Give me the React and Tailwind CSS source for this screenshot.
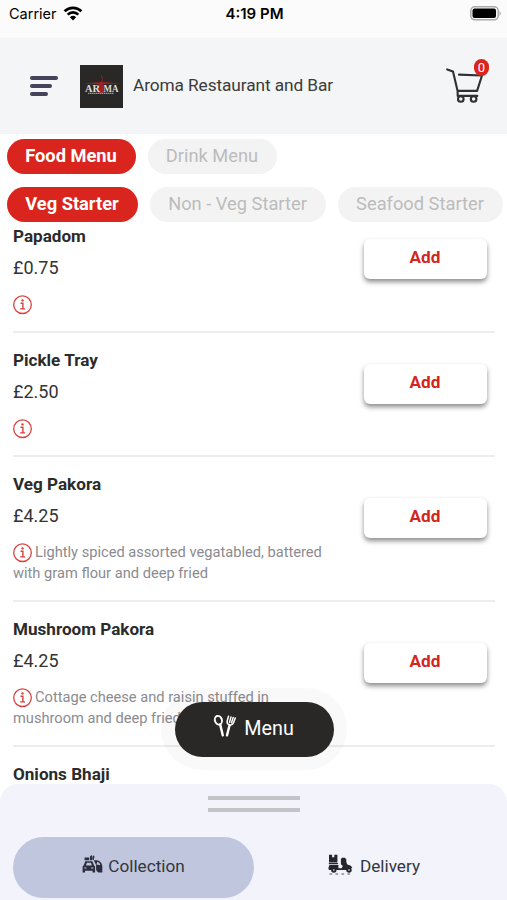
import clsx from "clsx";

const menuTypes = [
  { id: "food", label: "Food Menu", width: "w-[129px]", active: true },
  { id: "drink", label: "Drink Menu", width: "w-[129px]" },
];

const categories = [
  { id: "veg", label: "Veg Starter", width: "w-[131px]", active: true },
  { id: "non-veg", label: "Non - Veg Starter", width: "w-[176px]" },
  { id: "seafood", label: "Seafood Starter", width: "w-[165px]" },
];

const dishes = [
  { id: 1, name: "Papadom", price: "£0.75" },
  { id: 2, name: "Pickle Tray", price: "£2.50" },
  {
    id: 3,
    name: "Veg Pakora",
    price: "£4.25",
    lines: ["Lightly spiced assorted vegatabled, battered", "with gram flour and deep fried"],
  },
  {
    id: 4,
    name: "Mushroom Pakora",
    price: "£4.25",
    lines: ["Cottage cheese and raisin stuffed in", "mushroom and deep fried"],
  },
  { id: 5, name: "Onions Bhaji" },
];

function WifiIcon() {
  return (
    <svg viewBox="0 0 20 15" className="h-[15px] w-[20px]" fill="none" stroke="#000" strokeWidth="2.7">
      <path d="M1.6 5.3a12 12 0 0 1 16.8 0" />
      <path d="M4.7 8.6a7.6 7.6 0 0 1 10.6 0" />
      <path d="M10 14.4 6.9 11.2a4.5 4.5 0 0 1 6.2 0z" fill="#000" stroke="none" />
    </svg>
  );
}

function BatteryIcon() {
  return (
    <svg viewBox="0 0 32 15" className="h-[15px] w-[32px]">
      <rect x="0.8" y="0.8" width="27.4" height="13" rx="4" fill="#fafafa" stroke="#a9a9a9" strokeWidth="1.5" />
      <rect x="2.5" y="2.5" width="23.5" height="9.6" rx="2" fill="#000" />
      <path d="M29.5 5c1.6.6 1.6 4.2 0 4.8z" fill="#a9a9a9" />
    </svg>
  );
}

function StatusBar() {
  return (
    <div className="flex h-[38px] shrink-0 items-start justify-between bg-[#fbfbfb] pt-1 pr-[6px] pl-[9px] font-['Inter','Liberation_Sans',sans-serif] text-black">
      <div className="flex w-[168px] items-center gap-[6px]">
        <span className="text-[14.5px] leading-5">Carrier</span>
        <span className="pb-[2px]">
          <WifiIcon />
        </span>
      </div>
      <span className="text-[15px] leading-5 font-semibold">4:19 PM</span>
      <div className="-mr-[1px] flex w-[170px] justify-end pt-[2px]">
        <BatteryIcon />
      </div>
    </div>
  );
}

function Logo() {
  return (
    <svg viewBox="0 0 43 43" className="h-[43px] w-[43px]">
      <rect width="43" height="43" fill="#292826" />
      <path d="M3 18.4 18 17.2h7l15 1.2-15 .7h-7z" fill="#a51f25" />
      <path d="M21.3 9.5c-.8 3 1.8 4 .4 6.5-.9 1.6-5 4-5 8.2 0 2.6 1.6 4 3.6 4.2 2.8 0 4.6-1.8 4.4-4.4-.2-3-3-4.6-2.3-7.4.6-2.4.2-4.8-1.1-7.1z" fill="#a51f25" />
      <text x="5" y="27.2" fontFamily="Liberation Serif, serif" fontSize="11" fontWeight="700" fill="#dedede" textLength="15" lengthAdjust="spacingAndGlyphs">AR</text>
      <text x="23.5" y="27.2" fontFamily="Liberation Serif, serif" fontSize="11" fontWeight="700" fill="#dedede" textLength="15" lengthAdjust="spacingAndGlyphs">MA</text>
      <path d="M8 28.4h26" stroke="#999" strokeWidth="1.3" strokeDasharray="1.5 .5" />
    </svg>
  );
}

function CartIcon() {
  return (
    <svg viewBox="0 0 38 38" className="h-[38px] w-[38px]" fill="none" stroke="#2f3033" strokeWidth="2.1" strokeLinecap="round" strokeLinejoin="round">
      <path d="M1.2 2.4 7 4.5l4.6 19.4M13 7.6l23 .9-4.9 15.4H11.6l.1 5h19.6" />
      <circle cx="14.8" cy="32" r="2.8" />
      <circle cx="27.6" cy="32" r="2.8" />
    </svg>
  );
}

function Header() {
  return (
    <header className="flex h-24 shrink-0 items-center bg-[#f3f5f7] pr-[23px] pl-[30px]">
      <button className="flex w-[50px] flex-col gap-1" aria-label="Open navigation">
        <span className="h-1 w-7 rounded-full bg-[#45435b]" />
        <span className="h-1 w-[22px] rounded-full bg-[#45435b]" />
        <span className="h-1 w-[18px] rounded-full bg-[#45435b]" />
      </button>
      <Logo />
      <h1 className="ml-[10px] flex-1 pb-px text-[17.3px] tracking-[-0.1px] text-[#3b3b3b]">Aroma Restaurant and Bar</h1>
      <button className="relative" aria-label="Basket">
        <CartIcon />
        <span className="absolute -top-[8px] right-[-5px] flex h-[17px] w-[15px] items-center justify-center rounded-full bg-[#da251f] text-[13px] text-white">
          0
        </span>
      </button>
    </header>
  );
}

function Chip({ label, width, active }) {
  return (
    <button
      className={clsx(
        "flex h-[35px] shrink-0 items-center justify-center rounded-full pr-[1px] pb-[2px] text-[18.3px] whitespace-nowrap",
        width,
        active ? "bg-[#da251f] font-bold text-white" : "bg-[#f3f3f3] text-[#bcbcbc]"
      )}
    >
      {label}
    </button>
  );
}

function InfoIcon() {
  return (
    <svg viewBox="0 0 20 20" className="h-5 w-5 shrink-0" fill="none" stroke="#d8403c" strokeWidth="1.3">
      <circle cx="9.5" cy="9.7" r="8.8" />
      <path d="M7.5 8.2h2.4v5.6M7.2 13.9H12" strokeWidth="1.4" />
      <circle cx="9.5" cy="5.4" r="1.2" fill="#d8403c" stroke="none" />
    </svg>
  );
}

function DishRow({ dish, first }) {
  return (
    <li className={clsx("flex items-center justify-between border-b-2 border-[#ededed] pb-4", first ? "pt-[3px]" : "pt-4")}>
      <div>
        <h2 className="text-[17.1px] leading-[22px] font-bold text-[#2b2b2b]">{dish.name}</h2>
        {dish.price && (
          <>
            <p className="mt-[10px] text-[18px] leading-[22px] text-[#333]">{dish.price}</p>
            <p className="mt-[15px] text-[14.65px] leading-[21px] whitespace-nowrap text-[#8b8b8f]">
              <span className="flex h-[21px] items-center gap-[2px]">
                <InfoIcon />
                {dish.lines?.[0]}
              </span>
              {dish.lines && <span className="block">{dish.lines[1]}</span>}
            </p>
          </>
        )}
      </div>
      {dish.price && (
        <button
          className={clsx(
            "mr-2 flex h-10 w-[123px] items-center justify-center rounded-md bg-white pr-[1px] pb-[2px] text-[17.2px] font-bold text-[#d3261f] shadow-[0_3px_5px_rgba(0,0,0,0.45)]",
            first ? "mb-[22px]" : "mb-[21px]"
          )}
        >
          Add
        </button>
      )}
    </li>
  );
}

function CutleryIcon() {
  return (
    <svg viewBox="0 0 24 24" className="h-6 w-6" fill="none" stroke="#fff" strokeWidth="1.9" strokeLinecap="round">
      <ellipse cx="5.4" cy="6.2" rx="3.5" ry="4.4" transform="rotate(-18 5.4 6.2)" />
      <path d="m7.2 10.6 2.6 10.8" strokeWidth="2.4" />
      <path d="m16.6 11-2.6 10.4" strokeWidth="2.4" />
      <path d="M15.5 2.3 14.2 7c-.5 2 .4 3.3 2.3 3.9 1.9.5 3.3-.3 4-2.2L22.3 4M18 2.9l-1.5 5.4M20.2 3.5l-1.7 5.2" strokeWidth="1.5" />
    </svg>
  );
}

function CollectionIcon() {
  return (
    <svg viewBox="0 0 21 20" className="h-5 w-[21px]" fill="#292d3c">
      <path d="M2.6 3.4h4.6v2.8H2.6zM8 2.6l1.6-1.5.9 1.8-.4 3.4H8zM11 1.3l1.4 1-.6 3.8h-1.2z" />
      <path d="M3.3 7.2h7l1.8 4.2 1 1.1v5.9h-2.5v-1.7H3v1.7H.6v-5.9l1-1.1zM4.8 8.8l-.8 2.6h5.8L9 8.8zM2.2 13.4v1.2h2.3v-1.2zm6.8 0v1.2h2.4v-1.2z" fillRule="evenodd" />
      <path d="M11.7 6.2h3c3 .2 5.5 3 5.6 6.1v6.1h-3.8c-1.8-.8-2.5-2-2.4-4.1v-3.4zM15.4 7.7l-1 2.9 4 .6c-.5-1.6-1.6-3-3-3.5z" fillRule="evenodd" />
    </svg>
  );
}

function DeliveryIcon() {
  return (
    <svg viewBox="0 0 25 21" className="h-[21px] w-[25px]" fill="#25252b">
      <path d="M1 .7h3.1v2.6h2.2V.7h3.1v7.8H1zM.8 9.1h9.2v1.2H.8z" />
      <path d="M1.5 11h8.9v3.3h3.2l1.2-2.2-1.9-1.9V5.4l.8-1.7h3.2l1.5 1.9-.2 1.8.9 2.9 1.4.7c2 .2 3.4 1.5 3.8 3h-1.5l-.6 1.9H8.4l-2-1.2-3.3 1.2H1L.3 14z" />
      <circle cx="5.8" cy="16" r="2.7" />
      <circle cx="21" cy="16" r="2.7" />
      <circle cx="5.8" cy="16" r=".8" fill="#f2f3fb" />
      <circle cx="21" cy="16" r=".8" fill="#f2f3fb" />
      <path d="M1.5 20H24" stroke="#55555a" strokeWidth="1" strokeDasharray="2.6 3.4" />
    </svg>
  );
}

function OrderSheet() {
  return (
    <footer className="flex h-[116px] shrink-0 flex-col items-center rounded-t-[18px] bg-[#f2f3fb] pt-3">
      <div className="flex w-[92px] flex-col gap-2">
        <span className="h-1 bg-[#c3c4c8]" />
        <span className="h-1 bg-[#c3c4c8]" />
      </div>
      <div className="mt-[25px] flex w-full px-[13px] text-[17.2px] text-[#333640]">
        <button className="flex h-[61px] w-[241px] items-center justify-center gap-[5px] rounded-full bg-[#bfc6de] pb-[2px]">
          <span className="pb-[6px]"><CollectionIcon /></span>
          Collection
        </button>
        <button className="flex h-[61px] w-[240px] items-center justify-center gap-[7px] pb-[2px]">
          <span className="pb-[5px]"><DeliveryIcon /></span>
          Delivery
        </button>
      </div>
    </footer>
  );
}

export default function App() {
  return (
    <div className="relative flex h-[900px] w-[507px] flex-col overflow-hidden bg-white font-['Roboto','Liberation_Sans',sans-serif]">
      <StatusBar />
      <Header />

      <nav className="flex shrink-0 flex-col gap-[13px] overflow-hidden pt-[5px] pl-[7px]">
        <div className="flex gap-3">
          {menuTypes.map((type) => (
            <Chip key={type.id} {...type} />
          ))}
        </div>
        <div className="flex gap-3">
          {categories.map((category) => (
            <Chip key={category.id} {...category} />
          ))}
        </div>
      </nav>

      <ul className="min-h-0 flex-1 overflow-hidden pr-3 pl-[13px]">
        {dishes.map((dish, index) => (
          <DishRow key={dish.id} dish={dish} first={index === 0} />
        ))}
      </ul>

      <OrderSheet />

      {/* Floating menu button */}
      <div className="absolute top-[688px] left-[161px] rounded-full bg-black/[0.025] p-[13.5px]">
        <button className="flex h-[55px] w-[159px] items-center justify-center gap-[7px] rounded-full bg-[#292827] pr-[1px] text-[19.8px] text-white">
          <span className="pb-[6px]"><CutleryIcon /></span>
          Menu
        </button>
      </div>
    </div>
  );
}
